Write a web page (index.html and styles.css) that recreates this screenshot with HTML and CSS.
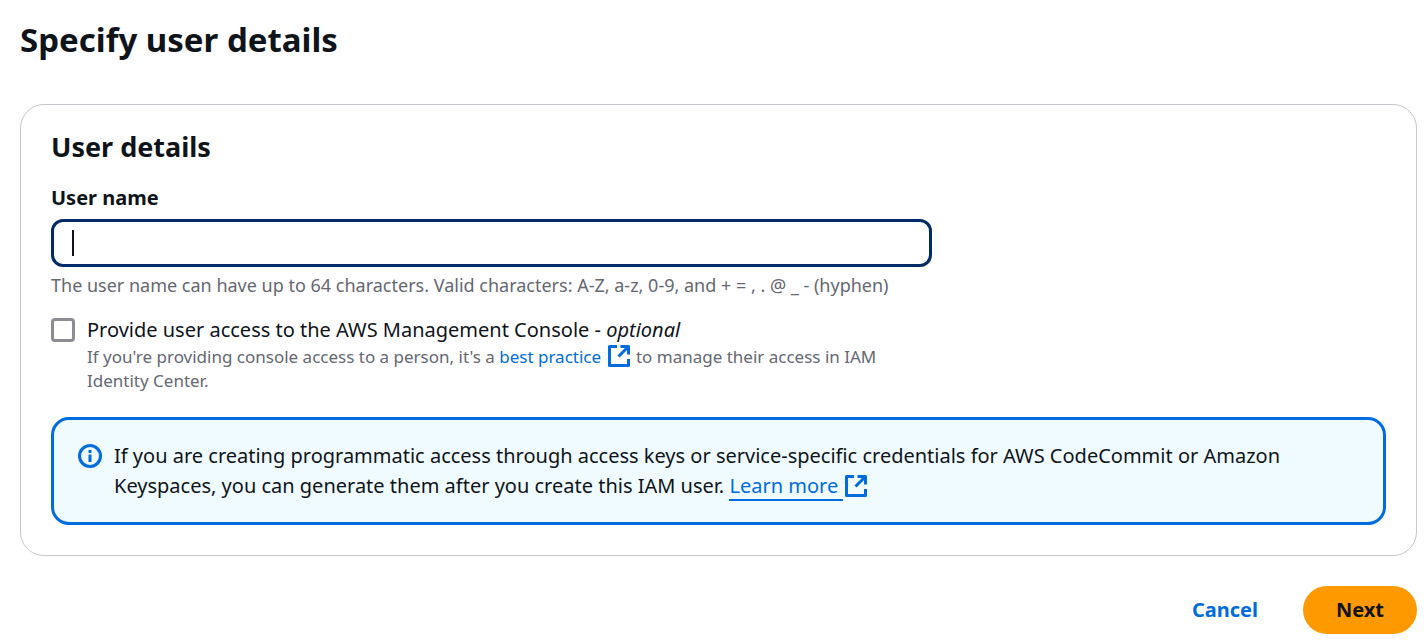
FILE: index.html
```html
<!DOCTYPE html>
<html lang="en">
<head>
<meta charset="utf-8">
<title>Specify user details</title>
<link rel="stylesheet" href="styles.css">
</head>
<body>
<main class="page">
  <h1 class="page-title">Specify user details</h1>
  <form class="form">
    <section class="panel">
      <h2 class="panel-title">User details</h2>
      <div class="field">
        <label class="field-label" for="user-name">User name</label>
        <input class="text-input" id="user-name" type="text" autocomplete="off" aria-describedby="user-name-hint" autofocus>
        <p class="hint" id="user-name-hint">The user name can have up to 64 characters. Valid characters: A-Z, a-z, 0-9, and + = , . @ _ - (hyphen)</p>
      </div>
      <div class="check-row">
        <input class="checkbox" id="console-access" type="checkbox" aria-describedby="console-hint">
        <div class="check-text">
          <label class="check-label" for="console-access">Provide user access to the AWS Management Console - <em>optional</em></label>
          <p class="hint small" id="console-hint">If you're providing console access to a person, it's a <a class="link" href="#best-practice">best practice&nbsp;<svg class="external" viewBox="0 0 22 22" aria-hidden="true"><path d="M9 1.5H1.5v19h19V14M12.5 1.5h8v8M20 2l-9.5 9.5"/></svg></a> to manage their access in IAM Identity Center.</p>
        </div>
      </div>
      <div class="alert">
        <svg class="info" viewBox="0 0 24 24" aria-hidden="true"><circle cx="12" cy="12" r="10.5"/><path d="M12 6v3M12 10.5V18"/></svg>
        <p class="alert-text">If you are creating programmatic access through access keys or service-specific credentials for AWS CodeCommit or Amazon Keyspaces, you can generate them after you create this IAM user. <a class="link" href="#learn-more"><span class="underlined">Learn more&nbsp;</span><svg class="external" viewBox="0 0 22 22" aria-hidden="true"><path d="M9 1.5H1.5v19h19V14M12.5 1.5h8v8M20 2l-9.5 9.5"/></svg></a></p>
      </div>
    </section>
    <div class="actions">
      <button class="button" type="button">Cancel</button>
      <button class="button primary" type="button">Next</button>
    </div>
  </form>
</main>
</body>
</html>
```
FILE: styles.css
```css
* { box-sizing: border-box; }

body {
  margin: 0;
  background: #fff;
  color: #0f141a;
  font-family: "Noto Sans", "Open Sans", sans-serif;
  font-size: 20px;
  line-height: 30px;
}

h1, h2, p { margin: 0; }

.page { padding: 16px 8px 8px 20px; }

.page-title {
  font-size: 33px;
  line-height: 48px;
  font-weight: 700;
}

.form { margin-top: 40px; }

.panel {
  padding: 27px 30px 30px;
  border: 1px solid #c6c6cd;
  border-radius: 24px;
}

.panel-title {
  font-size: 27px;
  line-height: 30px;
}

.field, .check-row { width: 66%; }

.field {
  display: flex;
  flex-direction: column;
  margin-top: 20px;
}

.field-label {
  font-weight: 700;
  line-height: 32px;
}

.text-input {
  height: 48px;
  margin-top: 5px;
  padding: 0 20px;
  border: 3px solid #002b66;
  border-radius: 12px;
  background: #fff;
  color: #0f141a;
  font: inherit;
  outline: none;
  caret-color: transparent;
}

.text-input:focus {
  background: linear-gradient(#0f141a, #0f141a) 18px center / 2px 26px no-repeat #fff;
}

.hint {
  color: #656871;
  font-size: 18px;
  line-height: 24px;
}

.hint.small { font-size: 17px; }

.field .hint { margin-top: 6px; }

.check-row {
  display: flex;
  gap: 12px;
  margin-top: 18px;
}

.checkbox {
  flex: none;
  appearance: none;
  width: 24px;
  height: 24px;
  margin: 3px 0 0;
  border: 3px solid #8c8c94;
  border-radius: 4px;
  background: #fff;
}

.checkbox:checked { background: #006ce0; border-color: #006ce0; }

.check-label { display: block; }

.link { color: #006ce0; text-decoration: none; }

.underlined { border-bottom: 2px solid #006ce0; }

.external {
  width: 22px;
  height: 22px;
  margin: 0 2px;
  vertical-align: -4px;
  fill: none;
  stroke: #006ce0;
  stroke-width: 3;
  stroke-linejoin: round;
}

.alert {
  display: flex;
  gap: 12px;
  margin-top: 24px;
  padding: 21px 24px;
  border: 3px solid #006ce0;
  border-radius: 18px;
  background: #f0fbff;
}

.info {
  flex: none;
  width: 24px;
  height: 24px;
  margin-top: 3px;
  fill: none;
  stroke: #006ce0;
  stroke-width: 3;
}

.actions {
  display: flex;
  justify-content: flex-end;
  gap: 12px;
  margin-top: 30px;
}

.button {
  height: 48px;
  padding: 0 33px;
  border: 0;
  border-radius: 24px;
  background: none;
  color: #006ce0;
  font: inherit;
  font-weight: 700;
  cursor: pointer;
}

.primary { background: #ff9900; color: #0f141a; }
```
